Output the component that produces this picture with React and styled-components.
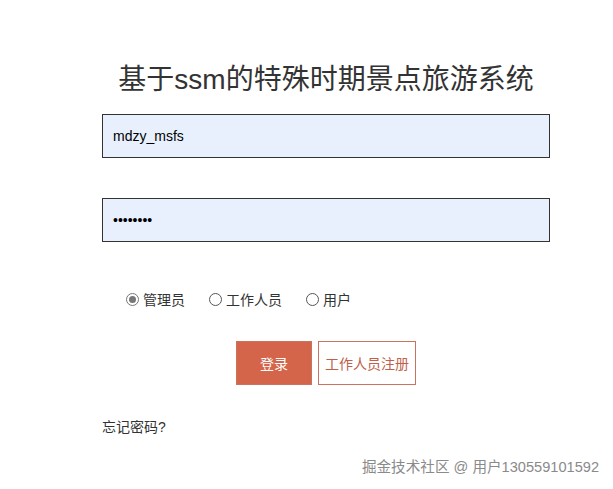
import React from 'react';
import styled, { createGlobalStyle } from 'styled-components';

const GlobalStyle = createGlobalStyle`
  html, body {
    margin: 0;
    padding: 0;
    background: #fff;
    font-family: "Liberation Sans", "Noto Sans CJK SC", sans-serif;
  }
`;

const Page = styled.div`
  position: relative;
  width: 613px;
  height: 489px;
  overflow: hidden;
`;

const LoginBox = styled.div`
  width: 448px;
  margin-left: 102px;
  padding-top: 62px;
`;

const Title = styled.h1`
  margin: 0 0 16px;
  text-align: center;
  font-size: 28px;
  line-height: 36px;
  font-weight: normal;
  color: #333;
`;

const Field = styled.input`
  display: block;
  box-sizing: border-box;
  width: 448px;
  height: 44px;
  margin: 0 0 40px;
  padding: 0 10px;
  border: 1px solid #333;
  background: #e8f0fe;
  font-family: "Liberation Sans", sans-serif;
  font-size: 14px;
  color: #000;
  outline: none;
`;

const RoleRow = styled.div`
  display: flex;
  align-items: center;
  gap: 24px;
  margin: 47px 0 0 24px;
  height: 20px;
`;

const Role = styled.label`
  display: flex;
  align-items: center;
  gap: 4px;
  font-size: 14px;
  color: #333;
`;

const Dot = styled.span`
  box-sizing: border-box;
  width: 13px;
  height: 13px;
  border-radius: 50%;
  border: 1px solid ${p => (p.$on ? '#777' : '#555')};
  background: #fff;
  display: flex;
  align-items: center;
  justify-content: center;

  &::after {
    content: '';
    width: 7px;
    height: 7px;
    border-radius: 50%;
    background: ${p => (p.$on ? '#777' : 'transparent')};
  }
`;

const Buttons = styled.div`
  display: flex;
  justify-content: center;
  gap: 6px;
  margin-top: 32px;
`;

const Button = styled.button`
  box-sizing: border-box;
  height: 44px;
  padding: 0 ${p => (p.$outline ? '6px' : '23px')};
  border: 1px solid #c8735d;
  background: ${p => (p.$outline ? '#fff' : '#d4644a')};
  color: ${p => (p.$outline ? '#c0604a' : '#fff')};
  font-family: "Liberation Sans", "Noto Sans CJK SC", sans-serif;
  font-size: 14px;
  cursor: pointer;
`;

const Forgot = styled.a`
  display: block;
  margin-top: 31px;
  font-size: 14px;
  color: #333;
  text-decoration: none;
`;

const Watermark = styled.div`
  position: absolute;
  right: 14px;
  bottom: 13px;
  font-size: 14.6px;
  color: #8a8a8a;
`;

const roles = [
  { name: '管理员', on: true },
  { name: '工作人员', on: false },
  { name: '用户', on: false },
];

export default function App() {
  return (
    <Page>
      <GlobalStyle />
      <LoginBox>
        <Title>基于ssm的特殊时期景点旅游系统</Title>
        <Field type="text" defaultValue="mdzy_msfs" />
        <Field type="password" defaultValue="12345678" />
        <RoleRow>
          {roles.map(r => (
            <Role key={r.name}>
              <Dot $on={r.on} />
              {r.name}
            </Role>
          ))}
        </RoleRow>
        <Buttons>
          <Button>登录</Button>
          <Button $outline>工作人员注册</Button>
        </Buttons>
        <Forgot href="#">忘记密码?</Forgot>
      </LoginBox>
      <Watermark>掘金技术社区 @ 用户130559101592</Watermark>
    </Page>
  );
}
